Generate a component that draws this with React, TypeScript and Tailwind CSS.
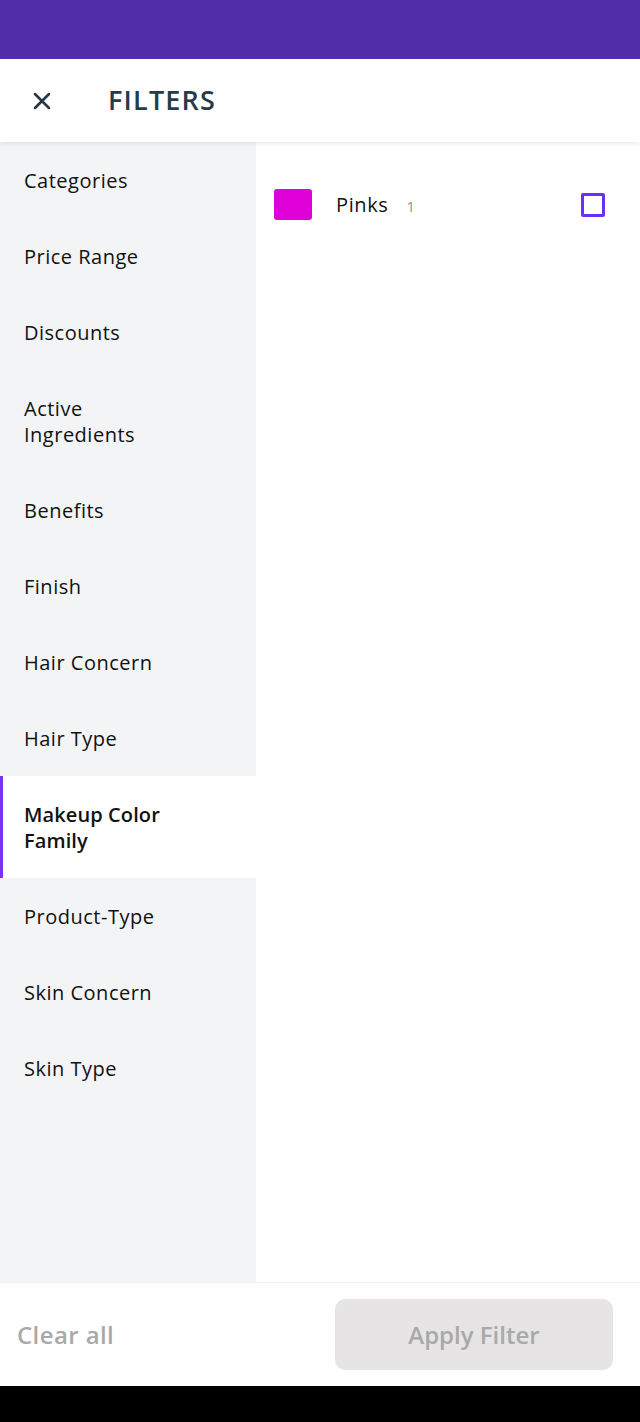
import { X } from "lucide-react";

const filters = [
  "Categories",
  "Price Range",
  "Discounts",
  "Active\nIngredients",
  "Benefits",
  "Finish",
  "Hair Concern",
  "Hair Type",
  "Makeup Color\nFamily",
  "Product-Type",
  "Skin Concern",
  "Skin Type",
];

const ACTIVE = 8;

export default function App() {
  return (
    <div className="flex h-[1422px] w-[640px] flex-col bg-white" style={{ fontFamily: '"Open Sans", sans-serif' }}>
      {/* status bar */}
      <div className="h-[59px] shrink-0 bg-[#512da8]" />

      {/* header */}
      <div className="relative z-10 flex h-[83px] shrink-0 items-center bg-white shadow-[0_2px_4px_rgba(0,0,0,0.08)]">
        <div className="flex w-[108px] items-center pl-[28px]">
          <X className="h-[28px] w-[28px] text-[#263843]" strokeWidth={2.2} />
        </div>
        <h1 className="text-[27px] font-semibold tracking-[1.2px] text-[#263c48]">FILTERS</h1>
      </div>

      {/* body */}
      <div className="flex min-h-0 flex-1">
        <ul className="w-[256px] shrink-0 bg-[#f3f4f6]">
          {filters.map((f, i) => (
            <li
              key={f}
              className={
                i === ACTIVE
                  ? "whitespace-pre-line border-l-[3px] border-[#7b2ff7] bg-white pt-[26px] pb-[24px] pl-[21px] pr-4 text-[20px] leading-[26px] font-semibold tracking-[0.1px] text-[#111]"
                  : "whitespace-pre-line pt-[26px] pb-[24px] pl-[24px] pr-4 text-[20px] leading-[26px] tracking-[0.5px] text-[#111]"
              }
            >
              {f}
            </li>
          ))}
        </ul>

        <div className="flex-1 bg-white">
          <div className="mt-[47px] flex items-center pl-[18px] pr-[35px]">
            <div className="h-[31px] w-[38px] rounded-[3px] bg-[#e000d8]" />
            <span className="ml-[24px] text-[20px] tracking-[0.6px] text-[#111]">Pinks</span>
            <span className="ml-[18px] mt-[3px] text-[15px] text-[#9a8f94]">1</span>
            <div className="ml-auto h-[24px] w-[24px] rounded-[2px] border-[3px] border-[#6a30f5]" />
          </div>
        </div>
      </div>

      {/* footer */}
      <div className="flex h-[104px] shrink-0 items-center justify-between border-t border-[#f0f0f0] bg-white pl-[17px] pr-[27px]">
        <button className="text-[24px] font-semibold tracking-[0.4px] text-[#a9a9a9]">Clear all</button>
        <button className="flex h-[71px] w-[278px] items-center justify-center rounded-[10px] bg-[#e6e4e5] text-[24px] font-semibold text-[#a9a9a9]">
          Apply Filter
        </button>
      </div>

      {/* nav bar */}
      <div className="h-[36px] shrink-0 bg-black" />
    </div>
  );
}
